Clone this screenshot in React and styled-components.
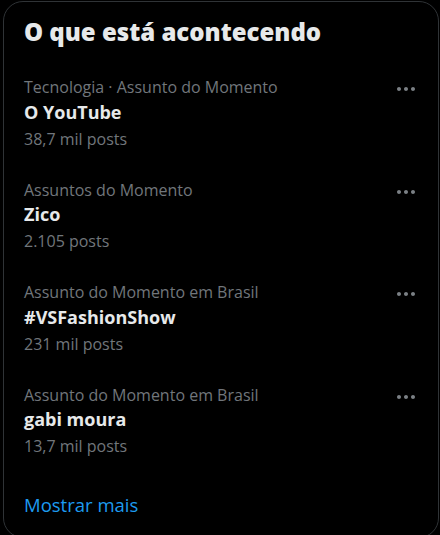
import React from 'react';
import styled, { createGlobalStyle } from 'styled-components';

const GlobalStyle = createGlobalStyle`
  html, body {
    margin: 0;
    background: #000;
  }
  body {
    font-family: "Open Sans", "Noto Sans", sans-serif;
  }
`;

const Page = styled.div`
  height: 535px;
  overflow: hidden;
  padding: 1px 0 0 3px;
  box-sizing: border-box;
`;

const Card = styled.section`
  width: 436px;
  box-sizing: border-box;
  border: 1px solid #2f3336;
  border-radius: 20px;
  display: flex;
  flex-direction: column;
`;

const Header = styled.h2`
  margin: 0;
  padding: 15px 20px;
  font-size: 24px;
  line-height: 30px;
  font-weight: 800;
  color: #e7e9ea;
`;

const Trend = styled.div`
  display: flex;
  justify-content: space-between;
  align-items: flex-start;
  padding: 15px 20px 16px;
`;

const Info = styled.div`
  display: flex;
  flex-direction: column;
`;

const Meta = styled.span`
  font-size: 16px;
  line-height: 20px;
  color: #71767b;
  margin-top: ${({ $gap }) => ($gap ? '4px' : '0')};
`;

const Name = styled.span`
  padding-top: 2.5px;
  font-size: 18px;
  line-height: 25px;
  font-weight: 700;
  color: #e7e9ea;
`;

const More = styled.button`
  display: flex;
  padding: 0;
  margin: 0;
  border: none;
  background: none;
  color: #7b8085;
  cursor: pointer;
  svg {
    width: 24px;
    height: 24px;
    fill: currentColor;
  }
`;

const ShowMore = styled.a`
  display: block;
  padding: 20px;
  font-size: 18.5px;
  line-height: 25px;
  color: #1d9bf0;
  text-decoration: none;
`;

const trends = [
  { meta: 'Tecnologia · Assunto do Momento', name: 'O YouTube', posts: '38,7 mil posts' },
  { meta: 'Assuntos do Momento', name: 'Zico', posts: '2.105 posts' },
  { meta: 'Assunto do Momento em Brasil', name: '#VSFashionShow', posts: '231 mil posts' },
  { meta: 'Assunto do Momento em Brasil', name: 'gabi moura', posts: '13,7 mil posts' },
];

const Dots = () => (
  <svg viewBox="0 0 24 24" aria-hidden="true">
    <path d="M3 12c0-1.1.9-2 2-2s2 .9 2 2-.9 2-2 2-2-.9-2-2zm9 2c1.1 0 2-.9 2-2s-.9-2-2-2-2 .9-2 2 .9 2 2 2zm7 0c1.1 0 2-.9 2-2s-.9-2-2-2-2 .9-2 2 .9 2 2 2z" />
  </svg>
);

export default function App() {
  return (
    <Page>
      <GlobalStyle />
      <Card>
        <Header>O que está acontecendo</Header>
        {trends.map((t) => (
          <Trend key={t.name}>
            <Info>
              <Meta>{t.meta}</Meta>
              <Name>{t.name}</Name>
              <Meta $gap>{t.posts}</Meta>
            </Info>
            <More aria-label="Mais">
              <Dots />
            </More>
          </Trend>
        ))}
        <ShowMore href="#">Mostrar mais</ShowMore>
      </Card>
    </Page>
  );
}
